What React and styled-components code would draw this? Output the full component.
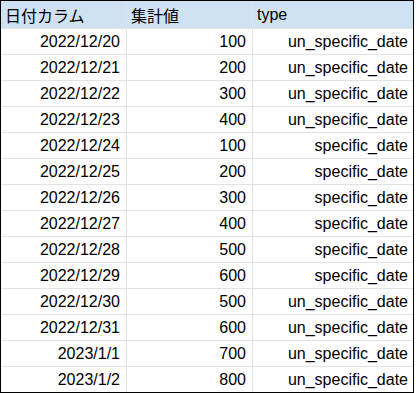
import React from "react";
import styled, { createGlobalStyle } from "styled-components";

const rows = [
  ["2022/12/20", 100, "un_specific_date"],
  ["2022/12/21", 200, "un_specific_date"],
  ["2022/12/22", 300, "un_specific_date"],
  ["2022/12/23", 400, "un_specific_date"],
  ["2022/12/24", 100, "specific_date"],
  ["2022/12/25", 200, "specific_date"],
  ["2022/12/26", 300, "specific_date"],
  ["2022/12/27", 400, "specific_date"],
  ["2022/12/28", 500, "specific_date"],
  ["2022/12/29", 600, "specific_date"],
  ["2022/12/30", 500, "un_specific_date"],
  ["2022/12/31", 600, "un_specific_date"],
  ["2023/1/1", 700, "un_specific_date"],
  ["2023/1/2", 800, "un_specific_date"],
];

const GlobalStyle = createGlobalStyle`
  body {
    margin: 0;
    background: #fff;
    font-family: "Liberation Sans", Arial, "Noto Sans CJK JP", sans-serif;
  }
`;

const Sheet = styled.div`
  width: 412px;
  display: grid;
  grid-template-columns: 125px 125px 160px;
  grid-template-rows: 27px;
  grid-auto-rows: 25px;
  gap: 1px;
  background: #e2e2e2;
  border: 1px solid #000;
`;

const HeadCell = styled.div`
  background: #cfe2f3;
  color: #000;
  font-size: 16px;
  padding: 0 4px;
  display: flex;
  align-items: center;
  font-family: "Liberation Sans", "Noto Sans CJK JP", sans-serif;
`;

const Cell = styled.div`
  background: #fff;
  color: #000;
  font-size: 16px;
  padding: 0 5px 0 4px;
  display: flex;
  align-items: flex-end;
  padding-bottom: 3px;
  justify-content: flex-end;
  padding-right: ${(p) => (p.$last ? "5px" : "6px")};
`;

export default function App() {
  return (
    <>
      <GlobalStyle />
      <Sheet>
        <HeadCell>日付カラム</HeadCell>
        <HeadCell>集計値</HeadCell>
        <HeadCell>type</HeadCell>
        {rows.map(([date, value, type]) => (
          <React.Fragment key={date}>
            <Cell>{date}</Cell>
            <Cell>{value}</Cell>
            <Cell $last>{type}</Cell>
          </React.Fragment>
        ))}
      </Sheet>
    </>
  );
}
